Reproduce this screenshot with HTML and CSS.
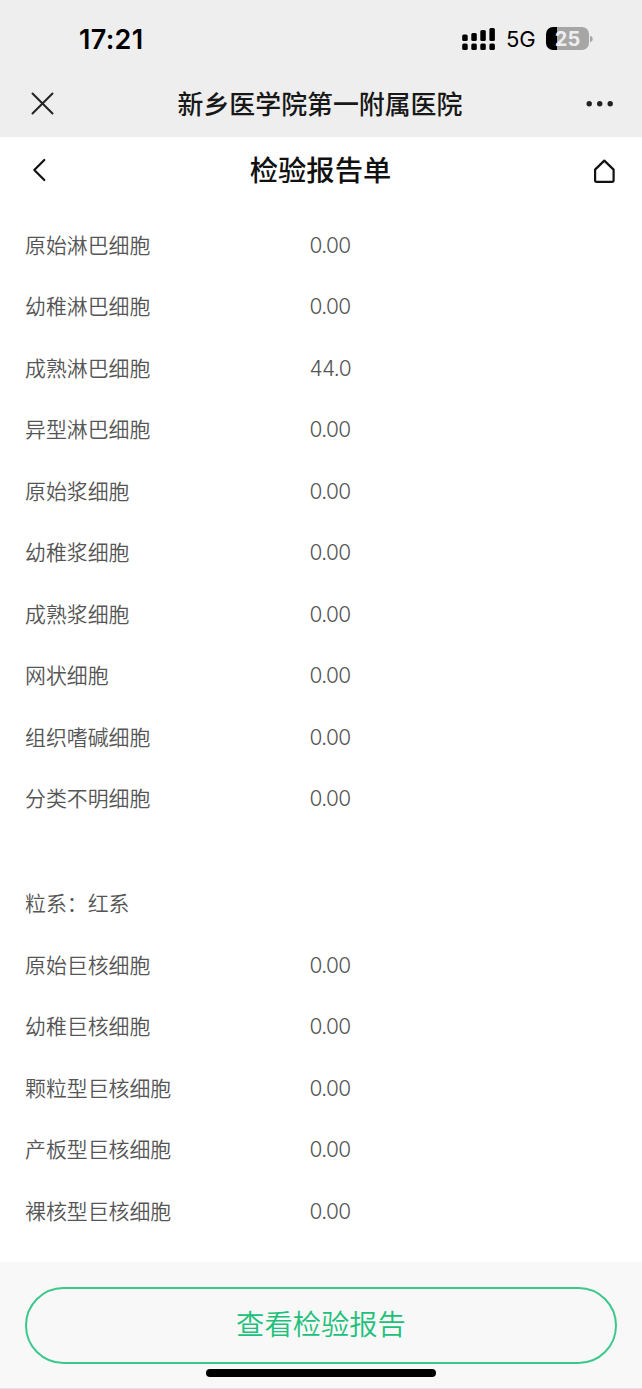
FILE: index.html
```html
<!DOCTYPE html>
<html lang="zh-CN">
<head>
    <meta charset="UTF-8">
    <meta name="viewport" content="width=device-width, initial-scale=1.0">
    <title>检验报告单</title>
    <link rel="stylesheet" href="styles.css">
</head>
<body>
    <div class="top">
        <div class="status-bar">
            <span class="time">17:21</span>
            <div class="status-right">
                <svg class="signal" width="34" height="24" viewBox="0 0 34 24">
                    <rect x="0.2" y="7.4" width="5.5" height="6.6" rx="1.5"/>
                    <rect x="9.3" y="6" width="5.5" height="8" rx="1.5"/>
                    <rect x="18.3" y="3" width="5.5" height="11" rx="1.5"/>
                    <rect x="27.4" y="1" width="5.5" height="13" rx="1.5"/>
                    <rect x="0.2" y="16.6" width="5.5" height="6.4" rx="1.5"/>
                    <rect x="9.3" y="16.6" width="5.5" height="6.4" rx="1.5"/>
                    <rect x="18.3" y="16.6" width="5.5" height="6.4" rx="1.5"/>
                    <rect x="27.4" y="16.6" width="5.5" height="6.4" rx="1.5"/>
                </svg>
                <span class="network">5G</span>
                <div class="battery">25</div>
                <svg class="battery-tip" width="3" height="8" viewBox="0 0 3 8">
                    <path d="M0 0.5 Q2.8 1.5 2.8 4 Q2.8 6.5 0 7.5 Z"/>
                </svg>
            </div>
        </div>
        <div class="nav-bar">
            <svg class="icon-close" width="24" height="24" viewBox="0 0 24 24">
                <path d="M2.5 1.5 L22.5 21.5 M22.5 1.5 L2.5 21.5"/>
            </svg>
            <span class="nav-title">新乡医学院第一附属医院</span>
            <svg class="icon-more" width="28" height="8" viewBox="0 0 28 8">
                <circle cx="3.2" cy="3.8" r="2.7"/>
                <circle cx="13.7" cy="3.8" r="2.7"/>
                <circle cx="24.2" cy="3.8" r="2.7"/>
            </svg>
        </div>
    </div>

    <header class="page-header">
        <svg class="icon-back" width="14" height="24" viewBox="0 0 14 24">
            <path d="M12.3 2 L2.3 12 L12.3 22"/>
        </svg>
        <h1>检验报告单</h1>
        <svg class="icon-home" width="22" height="26" viewBox="0 0 22 26">
            <path d="M11.3 3.6 L20.6 12.6 V23.2 Q20.6 24.8 19 24.8 H3.7 Q2.1 24.8 2.1 23.2 V12.6 Z"/>
        </svg>
    </header>

    <main class="report">
        <div class="group">
            <div class="row"><span>原始淋巴细胞</span><span class="value">0.00</span></div>
            <div class="row"><span>幼稚淋巴细胞</span><span class="value">0.00</span></div>
            <div class="row"><span>成熟淋巴细胞</span><span class="value">44.0</span></div>
            <div class="row"><span>异型淋巴细胞</span><span class="value">0.00</span></div>
            <div class="row"><span>原始浆细胞</span><span class="value">0.00</span></div>
            <div class="row"><span>幼稚浆细胞</span><span class="value">0.00</span></div>
            <div class="row"><span>成熟浆细胞</span><span class="value">0.00</span></div>
            <div class="row"><span>网状细胞</span><span class="value">0.00</span></div>
            <div class="row"><span>组织嗜碱细胞</span><span class="value">0.00</span></div>
            <div class="row"><span>分类不明细胞</span><span class="value">0.00</span></div>
        </div>
        <div class="group">
            <div class="row"><span>粒系：红系</span></div>
            <div class="row"><span>原始巨核细胞</span><span class="value">0.00</span></div>
            <div class="row"><span>幼稚巨核细胞</span><span class="value">0.00</span></div>
            <div class="row"><span>颗粒型巨核细胞</span><span class="value">0.00</span></div>
            <div class="row"><span>产板型巨核细胞</span><span class="value">0.00</span></div>
            <div class="row"><span>裸核型巨核细胞</span><span class="value">0.00</span></div>
        </div>
    </main>

    <footer class="footer">
        <button class="btn-report">查看检验报告</button>
        <div class="home-indicator"></div>
    </footer>
</body>
</html>
```

FILE: styles.css
```css
* {
    box-sizing: border-box;
}

body {
    margin: 0;
    height: 1389px;
    display: flex;
    flex-direction: column;
    background-color: #fff;
    font-family: Inter, "Noto Sans CJK SC", sans-serif;
    color: #555;
}

svg {
    display: block;
    flex-shrink: 0;
}

/* Barra de estado y navegación */
.top {
    height: 137px;
    flex-shrink: 0;
    background-color: #eeeeee;
}

.status-bar {
    height: 70px;
    padding: 7px 49px 0 79px;
    display: flex;
    align-items: center;
    justify-content: space-between;
    color: #000;
}

.time {
    padding-top: 1px;
    font-size: 27px;
    font-weight: 600;
    letter-spacing: 0.3px;
}

.status-right {
    display: flex;
    align-items: center;
}

.network {
    width: 30px;
    margin: 1px 10px 0 10px;
    font-size: 22px;
}

.battery {
    width: 43px;
    height: 23px;
    border-radius: 7px;
    background: linear-gradient(to right, #000 11px, #a6a6a6 11px);
    color: #eee;
    font-size: 20px;
    font-weight: 700;
    line-height: 24px;
    text-align: center;
}

.battery-tip {
    margin-left: 1px;
    fill: #a6a6a6;
}

.nav-bar {
    height: 67px;
    padding: 0 28px 0 30px;
    display: flex;
    align-items: center;
    justify-content: space-between;
}

.nav-title {
    padding-bottom: 2px;
    font-size: 25.9px;
    font-weight: 500;
    color: #181818;
}

.icon-close {
    fill: none;
    stroke: #222;
    stroke-width: 2;
    stroke-linecap: round;
}

.icon-more {
    fill: #222;
}

/* Cabecera de la página */
.page-header {
    height: 77px;
    flex-shrink: 0;
    padding: 0 27px 11px 32px;
    display: flex;
    align-items: center;
    justify-content: space-between;
}

.page-header h1 {
    margin: 0;
    padding: 0 0 4px 2px;
    font-size: 28.3px;
    font-weight: 500;
    color: #111;
}

.icon-back,
.icon-home {
    fill: none;
    stroke: #111;
    stroke-width: 2.2;
    stroke-linecap: round;
    stroke-linejoin: round;
}

/* Resultados */
.report {
    flex: 1;
    padding: 0 25px;
}

.group + .group {
    margin-top: 43.5px;
}

.row {
    height: 61.5px;
    padding-bottom: 2.3px;
    display: grid;
    grid-template-columns: 284.5px 1fr;
    align-items: center;
    font-size: 20.9px;
    font-weight: 350;
}

.value {
    padding-top: 3px;
    font-weight: 300;
    letter-spacing: -0.6px;
}

/* Botón inferior */
.footer {
    height: 127px;
    flex-shrink: 0;
    padding: 25px 25px 0;
    background-color: #f8f8f8;
    border-bottom: 1px solid #e3e3e3;
}

.btn-report {
    display: block;
    width: 100%;
    height: 77px;
    padding: 0 0 6px;
    border: 2px solid #3cc88c;
    border-radius: 39px;
    background: none;
    color: #20c07a;
    font-family: inherit;
    font-size: 28.3px;
    font-weight: 350;
    cursor: pointer;
}

.home-indicator {
    width: 230px;
    height: 8px;
    margin: 5px auto 0;
    border-radius: 4px;
    background-color: #000;
}
```
